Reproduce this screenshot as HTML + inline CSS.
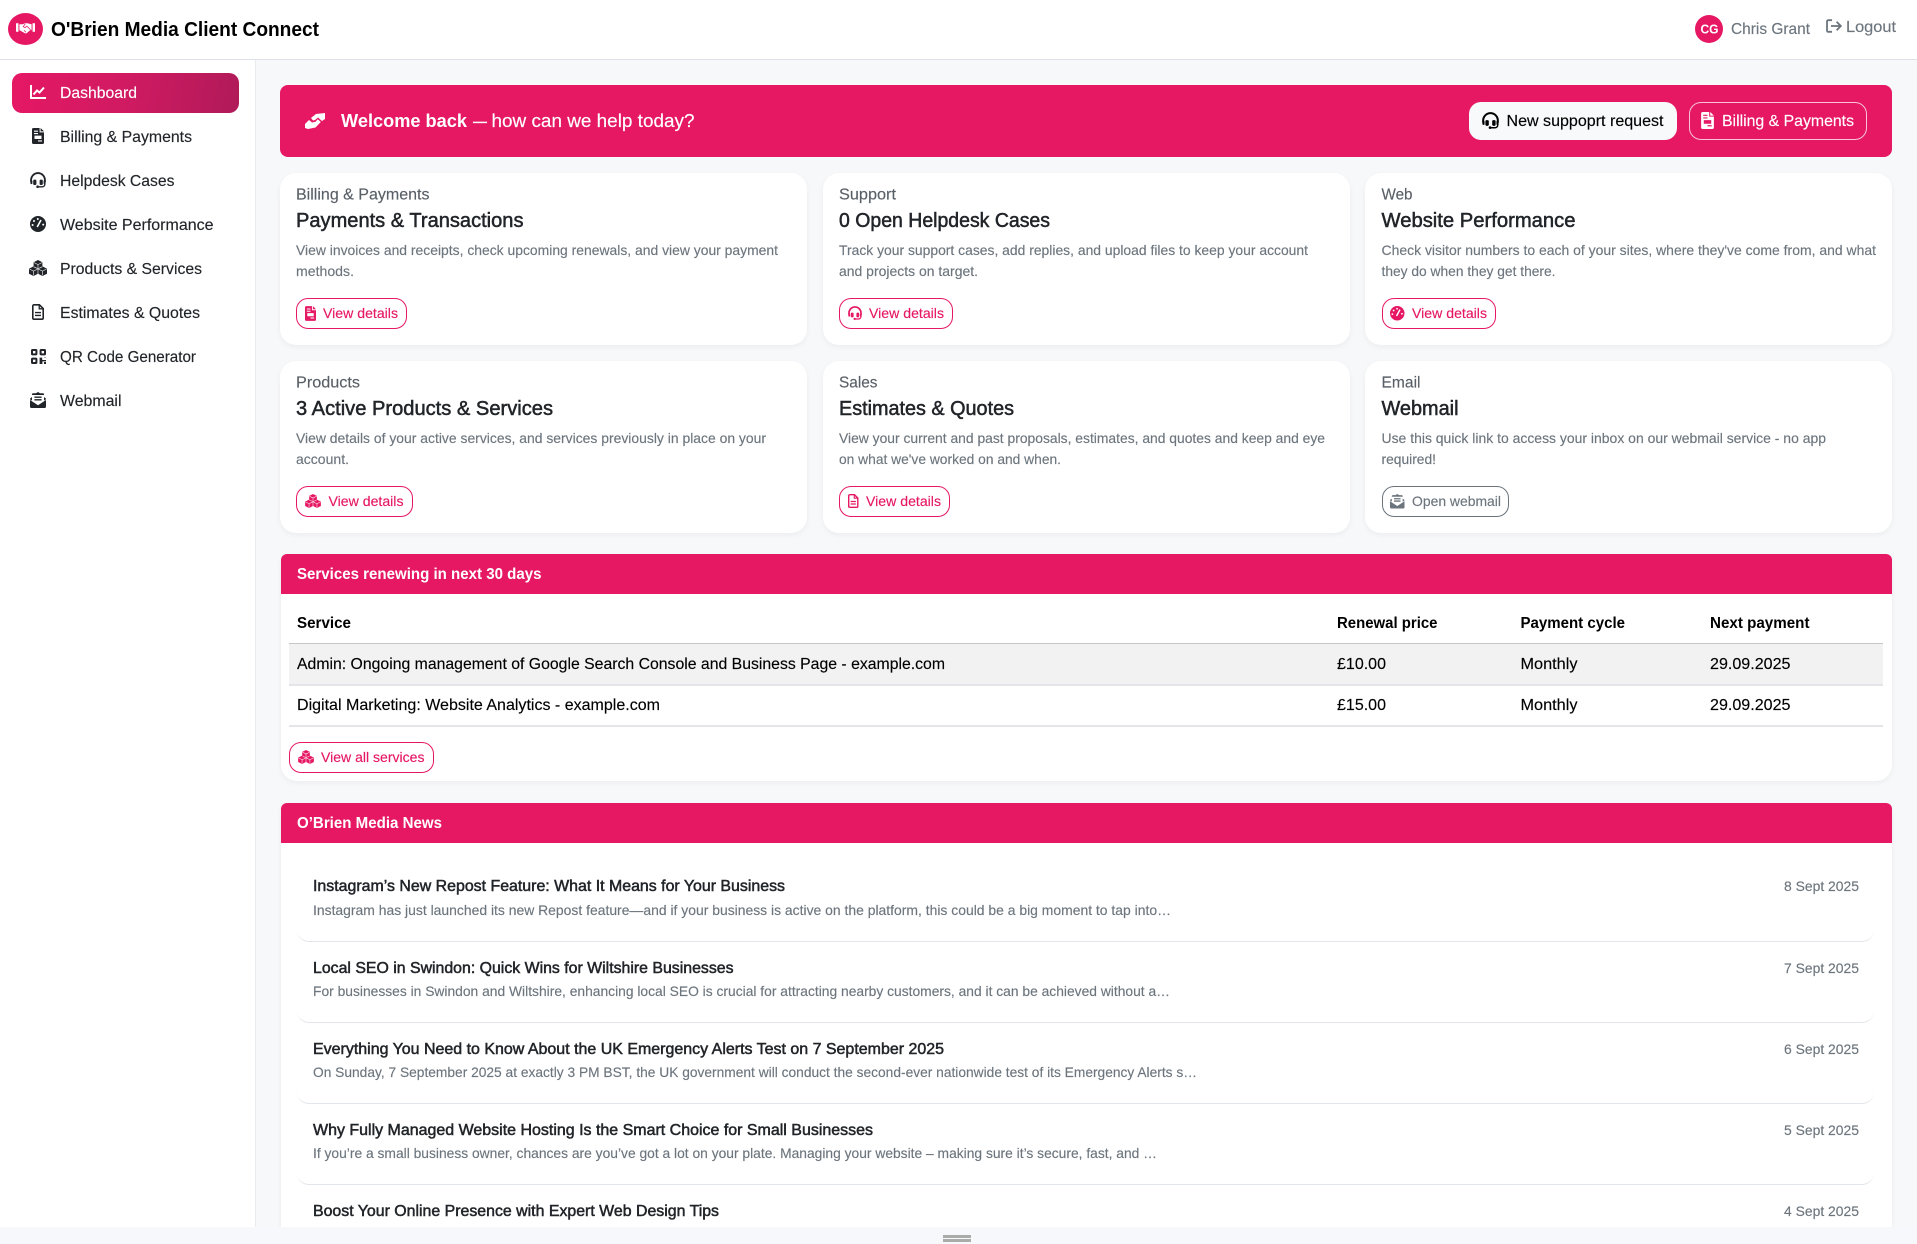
<!DOCTYPE html>
<html lang="en"><head><meta charset="utf-8"><title>O'Brien Media Client Connect</title>
<style>
*{box-sizing:border-box}
html,body{margin:0;padding:0;width:1917px;height:1244px;overflow:hidden;background:#f7f8fa;font-family:"Liberation Sans",sans-serif}
.b{position:absolute}
.topbar{left:0;top:0;width:1917px;height:60px;background:#fff;border-bottom:1.5px solid #dee2e6}
.side{left:0;top:60px;width:256px;height:1167px;background:#fff;border-right:1.5px solid #e9ecef}
.active{left:12px;top:73px;width:227px;height:40px;border-radius:10px;background:linear-gradient(100deg,#e61864 0%,#d01a62 50%,#b01a58 100%)}
.logo{left:8px;top:13px;width:35px;height:32px;border-radius:50%;background:#e61864}
.avatar{left:1695px;top:15px;width:28px;height:28px;border-radius:50%;background:#e61864}
.banner{left:280px;top:85px;width:1611.5px;height:72px;border-radius:8px;background:#e61864}
.btn1{left:1469px;top:102px;width:208px;height:38px;border-radius:12px;background:#f8f9fa}
.btn2{left:1689px;top:102px;width:178px;height:38px;border-radius:12px;border:1px solid #f6c5d8}
.card{background:#fff;border-radius:16px;box-shadow:0 2px 6px rgba(0,0,0,.05);height:172px;width:526.5px}
.vb{border:1px solid #e61864;border-radius:12px;height:31px;background:#fff}
.panel{left:281px;width:1610.5px;background:#fff;box-shadow:0 2px 6px rgba(0,0,0,.05);overflow:hidden}
.phead{position:absolute;left:0;top:0;width:100%;height:40px;background:#e61864}
.line{background:#e3e5e8;height:1.5px;left:289px;width:1594px}
.ni{left:297px;width:1577px;height:40px;border-bottom:1.5px solid #e2e5e9;border-radius:0 0 12px 12px}
.foot{left:0;top:1227px;width:1917px;height:17px;background:#f7f8fb}
.grip{left:943px;width:28px;height:2.5px;background:#a9aca9}
svg.t{position:absolute;left:0;top:0}
text{font-family:"Liberation Sans",sans-serif;white-space:pre;stroke:currentColor;stroke-width:.14px}
.s16{font-size:16px}.s14{font-size:14px}.s20{font-size:20px}.s18{font-size:18px}
text.bd{font-weight:700;stroke-width:0}
text.md{stroke-width:.5px}
.dk{fill:#212529;color:#212529}.gr{fill:#6c757d;color:#6c757d}.lb{fill:#585f66;color:#585f66}
.wh{fill:#fff;color:#fff}.pk{fill:#e61864;color:#e61864}.bk{fill:#000;color:#000}
</style></head><body>
<div class="b topbar"></div>
<div class="b side"></div>
<div class="b active"></div>
<div class="b logo"></div>
<div class="b avatar"></div>
<div class="b banner"></div>
<div class="b btn1"></div>
<div class="b btn2"></div>

<div class="b card" style="left:280px;top:173px"></div>
<div class="b card" style="left:823px;top:173px"></div>
<div class="b card" style="left:1365px;top:173px"></div>
<div class="b card" style="left:280px;top:361px"></div>
<div class="b card" style="left:823px;top:361px"></div>
<div class="b card" style="left:1365px;top:361px"></div>

<div class="b vb" style="left:296px;top:298px;width:111px"></div>
<div class="b vb" style="left:839px;top:298px;width:114px"></div>
<div class="b vb" style="left:1382px;top:298px;width:114px"></div>
<div class="b vb" style="left:296px;top:486px;width:117px"></div>
<div class="b vb" style="left:839px;top:486px;width:111px"></div>
<div class="b vb" style="left:1382px;top:486px;width:127px;border-color:#6c757d"></div>

<div class="b panel" style="top:554px;height:227px;border-radius:6px 6px 16px 16px"><div class="phead"></div></div>
<div class="b" style="left:289px;top:644px;width:1594px;height:40px;background:#f2f2f2"></div>
<div class="b" style="left:289px;top:642.5px;width:1594px;height:1.5px;background:#c4c6c8"></div>
<div class="b line" style="top:684px"></div>
<div class="b line" style="top:725px"></div>
<div class="b vb" style="left:289px;top:742px;width:145px"></div>

<div class="b panel" style="top:803px;height:424px;border-radius:6px 6px 0 0"><div class="phead"></div></div>
<div class="b ni" style="top:902px"></div>
<div class="b ni" style="top:983px"></div>
<div class="b ni" style="top:1064px"></div>
<div class="b ni" style="top:1145px"></div>

<div class="b foot"></div>
<div class="b grip" style="top:1235px"></div>
<div class="b grip" style="top:1239px"></div>

<svg class="t" width="1917" height="1244" viewBox="0 0 1917 1244" xmlns="http://www.w3.org/2000/svg">
<defs>
<symbol id="chart" viewBox="0 0 16 14"><path d="M1 0V13H16" fill="none" stroke="currentColor" stroke-width="2"/><path d="M3.5 9.5L7 5.5L9.5 7.5L14 2.5" fill="none" stroke="currentColor" stroke-width="2"/></symbol>
<symbol id="inv" viewBox="0 0 12 16"><path fill="currentColor" d="M8.6 0L12 3.4H8.6z"/><path fill="currentColor" fill-rule="evenodd" d="M1.5 0H7.6V4.4H12V14.5A1.5 1.5 0 0 1 10.5 16H1.5A1.5 1.5 0 0 1 0 14.5V1.5A1.5 1.5 0 0 1 1.5 0zM2 2.6V3.7H6V2.6zM2 5V6.1H6V5zM2.5 7.6V11H9.5V7.6zM6 12.4V13.5H10V12.4z"/></symbol>
<symbol id="head" viewBox="0 0 16 16"><path d="M1.1 10V8A6.9 6.9 0 0 1 14.9 8V10" fill="none" stroke="currentColor" stroke-width="1.9"/><rect x="3.2" y="7.6" width="3.2" height="5.4" rx="1.1" fill="currentColor"/><rect x="9.6" y="7.6" width="3.2" height="5.4" rx="1.1" fill="currentColor"/><rect x=".4" y="8.5" width="2" height="3.6" rx=".7" fill="currentColor"/><rect x="13.6" y="8.5" width="2" height="3.6" rx=".7" fill="currentColor"/><path d="M14.8 11V12.2A2.6 2.6 0 0 1 12.2 14.8H8" fill="none" stroke="currentColor" stroke-width="1.4"/><circle cx="7.6" cy="14.7" r="1.3" fill="currentColor"/></symbol>
<symbol id="gauge" viewBox="0 0 16 16"><circle cx="8" cy="8" r="8" fill="currentColor"/><path d="M7.2 11L11 4" stroke="#fff" stroke-width="1.6"/><circle cx="7.8" cy="3" r="1" fill="#fff"/><circle cx="4" cy="5" r="1" fill="#fff"/><circle cx="2.6" cy="9" r="1" fill="#fff"/><circle cx="13.2" cy="8.6" r="1" fill="#fff"/></symbol>
<symbol id="cubes" viewBox="0 0 18 16"><g fill="currentColor"><path d="M9 0L13.4 2.2V7.2L9 9.4L4.6 7.2V2.2z"/><path d="M4.5 6.4L9 8.7V13.7L4.5 16L0 13.7V8.7z"/><path d="M13.5 6.4L18 8.7V13.7L13.5 16L9 13.7V8.7z"/></g><g fill="none" stroke="#fff" stroke-width=".6"><path d="M5 2.6L9 4.6L13 2.6M9 4.6V8.3"/><path d="M.6 9.1L4.5 11.1L8.5 9.1M4.5 11.1V15.4"/><path d="M9.5 9.1L13.5 11.1L17.4 9.1M13.5 11.1V15.4M9 8.6V14M4.8 6.8L9 8.8L13.2 6.8"/></g></symbol>
<symbol id="doc" viewBox="0 0 12 16"><path d="M7.4 .8H2A1.2 1.2 0 0 0 .8 2V14A1.2 1.2 0 0 0 2 15.2H10A1.2 1.2 0 0 0 11.2 14V4.6z" fill="none" stroke="currentColor" stroke-width="1.6"/><path d="M7.2 1V4.8H11" fill="none" stroke="currentColor" stroke-width="1.3"/><path d="M3 8.6H9M3 11.4H9" stroke="currentColor" stroke-width="1.4"/></symbol>
<symbol id="qr" viewBox="0 0 15 15"><g fill="none" stroke="currentColor" stroke-width="2"><rect x="1" y="1" width="4.4" height="4.4" rx=".6"/><rect x="9.6" y="1" width="4.4" height="4.4" rx=".6"/><rect x="1" y="9.6" width="4.4" height="4.4" rx=".6"/></g><path fill="currentColor" d="M8.6 8.6H11.2V11H15V9H13V8.6H15V12.4H11.4V15H8.6zM13 13H15V15H13z"/></symbol>
<symbol id="mail" viewBox="0 0 16 16"><path fill="currentColor" fill-rule="evenodd" d="M8 0L10 1.3H13A1 1 0 0 1 14 2.3V5L16 6.6V7.2L14 8.6V3H2V8.6L0 7.2V6.6L2 5V2.3A1 1 0 0 1 3 1.3H6z"/><path fill="currentColor" d="M0 8L8 13.2L16 8V14.5A1.5 1.5 0 0 1 14.5 16H1.5A1.5 1.5 0 0 1 0 14.5z"/><path d="M4.4 5.2H11.6M4.4 7.8H11.6" stroke="currentColor" stroke-width="1.4"/></symbol>
<symbol id="shake" viewBox="0 0 20 12"><path fill="#fff" d="M0 1H2.6V10H0zM17.4 1H20V10H17.4zM3.6 2H7.2L10 .8L13 1.2L16.4 2V8.2L15 8.2L11 11.6L9.6 11.6L3.6 8.2z"/><path fill="none" stroke="#e61864" stroke-width=".8" d="M10 1.4L7.6 4.6L9.6 5.6L11.4 4L15.4 8M8.5 8.5L10.5 10.5"/></symbol>
<symbol id="hands" viewBox="0 0 20 16"><path fill="currentColor" d="M6 5L11 1L20 0V6L17 8L13 4.5L10 7L8 7.5zM4 7L7 9.5L10.5 8.8L12.8 6.2L15.8 9L10.5 14.5L3 16L0 15V11z"/></symbol>
<symbol id="logout" viewBox="0 0 16 14"><path d="M6 1.2H2.2A1.2 1.2 0 0 0 1 2.4V11.6A1.2 1.2 0 0 0 2.2 12.8H6" fill="none" stroke="currentColor" stroke-width="1.8"/><path d="M5 7H14.6M10.6 2.8L14.8 7L10.6 11.2" fill="none" stroke="currentColor" stroke-width="1.8"/></symbol>
</defs>

<!-- top -->
<use href="#shake" x="16" y="22" width="19" height="12"/>
<text x="51" y="36" class="s20 bd bk" textLength="268" lengthAdjust="spacingAndGlyphs">O'Brien Media Client Connect</text>
<text x="1700.5" y="33.5" class="bd wh" font-size="12.5" textLength="18" lengthAdjust="spacingAndGlyphs">CG</text>
<text x="1731" y="34" class="s16 gr" textLength="79" lengthAdjust="spacingAndGlyphs">Chris Grant</text>
<use href="#logout" x="1826" y="19" width="16" height="14" class="gr"/>
<text x="1846" y="32" class="s16 gr" textLength="50" lengthAdjust="spacingAndGlyphs">Logout</text>

<!-- sidebar -->
<use href="#chart" x="30" y="85" width="16" height="14" class="wh"/>
<text x="60" y="98" class="s16 wh" textLength="77" lengthAdjust="spacingAndGlyphs">Dashboard</text>
<use href="#inv" x="32" y="128" width="12" height="16" class="dk"/>
<text x="60" y="142" class="s16 dk" textLength="132" lengthAdjust="spacingAndGlyphs">Billing &amp; Payments</text>
<use href="#head" x="30" y="172" width="16" height="16" class="dk"/>
<text x="60" y="186" class="s16 dk" textLength="114.5" lengthAdjust="spacingAndGlyphs">Helpdesk Cases</text>
<use href="#gauge" x="30" y="216" width="16" height="16" class="dk"/>
<text x="60" y="230" class="s16 dk" textLength="153.5" lengthAdjust="spacingAndGlyphs">Website Performance</text>
<use href="#cubes" x="29" y="260" width="18" height="16" class="dk"/>
<text x="60" y="274" class="s16 dk" textLength="142" lengthAdjust="spacingAndGlyphs">Products &amp; Services</text>
<use href="#doc" x="32" y="304" width="12" height="16" class="dk"/>
<text x="60" y="318" class="s16 dk" textLength="140" lengthAdjust="spacingAndGlyphs">Estimates &amp; Quotes</text>
<use href="#qr" x="31" y="349" width="15" height="15" class="dk"/>
<text x="60" y="362" class="s16 dk" textLength="136" lengthAdjust="spacingAndGlyphs">QR Code Generator</text>
<use href="#mail" x="30" y="392" width="16" height="16" class="dk"/>
<text x="60" y="406" class="s16 dk" textLength="61.5" lengthAdjust="spacingAndGlyphs">Webmail</text>

<!-- banner -->
<use href="#hands" x="305" y="113" width="20" height="16" class="wh"/>
<text x="341" y="127" class="s18 bd wh" textLength="126" lengthAdjust="spacingAndGlyphs">Welcome back</text>
<text x="473" y="127" class="s18 wh" textLength="14" lengthAdjust="spacingAndGlyphs">—</text>
<text x="491.5" y="127" class="s18 wh" textLength="203" lengthAdjust="spacingAndGlyphs">how can we help today?</text>
<use href="#head" x="1482" y="112" width="17" height="17" class="bk"/>
<text x="1506.5" y="126" class="s16 bk" textLength="157" lengthAdjust="spacingAndGlyphs">New suppoprt request</text>
<use href="#inv" x="1701" y="112" width="13" height="17" class="wh"/>
<text x="1722" y="126" class="s16 wh" textLength="132" lengthAdjust="spacingAndGlyphs">Billing &amp; Payments</text>

<!-- cards row 1 -->
<text x="296" y="199.5" class="s16 lb" textLength="133.5" lengthAdjust="spacingAndGlyphs">Billing &amp; Payments</text>
<text x="296" y="227" class="s20 dk md" textLength="227.5" lengthAdjust="spacingAndGlyphs">Payments &amp; Transactions</text>
<text x="296" y="255" class="s14 gr" textLength="482" lengthAdjust="spacingAndGlyphs">View invoices and receipts, check upcoming renewals, and view your payment</text>
<text x="296" y="276" class="s14 gr" textLength="58" lengthAdjust="spacingAndGlyphs">methods.</text>
<use href="#inv" x="305" y="306" width="11" height="15" class="pk"/>
<text x="323" y="318" class="s14 pk" textLength="75" lengthAdjust="spacingAndGlyphs">View details</text>

<text x="839" y="199.5" class="s16 lb" textLength="57" lengthAdjust="spacingAndGlyphs">Support</text>
<text x="839" y="227" class="s20 dk md" textLength="211" lengthAdjust="spacingAndGlyphs">0 Open Helpdesk Cases</text>
<text x="839" y="255" class="s14 gr" textLength="469" lengthAdjust="spacingAndGlyphs">Track your support cases, add replies, and upload files to keep your account</text>
<text x="839" y="276" class="s14 gr" textLength="139" lengthAdjust="spacingAndGlyphs">and projects on target.</text>
<use href="#head" x="848" y="306" width="14" height="14" class="pk"/>
<text x="869" y="318" class="s14 pk" textLength="75" lengthAdjust="spacingAndGlyphs">View details</text>

<text x="1381.5" y="199.5" class="s16 lb" textLength="31" lengthAdjust="spacingAndGlyphs">Web</text>
<text x="1381.5" y="227" class="s20 dk md" textLength="194" lengthAdjust="spacingAndGlyphs">Website Performance</text>
<text x="1381.5" y="255" class="s14 gr" textLength="494.5" lengthAdjust="spacingAndGlyphs">Check visitor numbers to each of your sites, where they've come from, and what</text>
<text x="1381.5" y="276" class="s14 gr" textLength="174" lengthAdjust="spacingAndGlyphs">they do when they get there.</text>
<use href="#gauge" x="1390" y="306" width="14.5" height="14.5" class="pk"/>
<text x="1412" y="318" class="s14 pk" textLength="75" lengthAdjust="spacingAndGlyphs">View details</text>

<!-- cards row 2 -->
<text x="296" y="387.5" class="s16 lb" textLength="64" lengthAdjust="spacingAndGlyphs">Products</text>
<text x="296" y="415" class="s20 dk md" textLength="257" lengthAdjust="spacingAndGlyphs">3 Active Products &amp; Services</text>
<text x="296" y="443" class="s14 gr" textLength="470" lengthAdjust="spacingAndGlyphs">View details of your active services, and services previously in place on your</text>
<text x="296" y="464" class="s14 gr" textLength="53" lengthAdjust="spacingAndGlyphs">account.</text>
<use href="#cubes" x="305" y="494" width="16" height="14" class="pk"/>
<text x="328.5" y="506" class="s14 pk" textLength="75" lengthAdjust="spacingAndGlyphs">View details</text>

<text x="839" y="387.5" class="s16 lb" textLength="38.5" lengthAdjust="spacingAndGlyphs">Sales</text>
<text x="839" y="415" class="s20 dk md" textLength="175" lengthAdjust="spacingAndGlyphs">Estimates &amp; Quotes</text>
<text x="839" y="443" class="s14 gr" textLength="486" lengthAdjust="spacingAndGlyphs">View your current and past proposals, estimates, and quotes and keep and eye</text>
<text x="839" y="464" class="s14 gr" textLength="222" lengthAdjust="spacingAndGlyphs">on what we've worked on and when.</text>
<use href="#doc" x="848" y="494" width="10.5" height="14" class="pk"/>
<text x="866" y="506" class="s14 pk" textLength="75" lengthAdjust="spacingAndGlyphs">View details</text>

<text x="1381.5" y="387.5" class="s16 lb" textLength="39" lengthAdjust="spacingAndGlyphs">Email</text>
<text x="1381.5" y="415" class="s20 dk md" textLength="77" lengthAdjust="spacingAndGlyphs">Webmail</text>
<text x="1381.5" y="443" class="s14 gr" textLength="444.5" lengthAdjust="spacingAndGlyphs">Use this quick link to access your inbox on our webmail service - no app</text>
<text x="1381.5" y="464" class="s14 gr" textLength="54.5" lengthAdjust="spacingAndGlyphs">required!</text>
<use href="#mail" x="1390" y="494" width="14.5" height="14.5" class="gr"/>
<text x="1412" y="506" class="s14 gr" textLength="89" lengthAdjust="spacingAndGlyphs">Open webmail</text>

<!-- services -->
<text x="297" y="579" class="s16 bd wh" textLength="244.5" lengthAdjust="spacingAndGlyphs">Services renewing in next 30 days</text>
<text x="297" y="628" class="s16 bd bk" textLength="54" lengthAdjust="spacingAndGlyphs">Service</text>
<text x="1337" y="628" class="s16 bd bk" textLength="100.5" lengthAdjust="spacingAndGlyphs">Renewal price</text>
<text x="1520.5" y="628" class="s16 bd bk" textLength="104.5" lengthAdjust="spacingAndGlyphs">Payment cycle</text>
<text x="1710" y="628" class="s16 bd bk" textLength="99.5" lengthAdjust="spacingAndGlyphs">Next payment</text>
<text x="297" y="669" class="s16 bk" textLength="648" lengthAdjust="spacingAndGlyphs">Admin: Ongoing management of Google Search Console and Business Page - example.com</text>
<text x="1337" y="669" class="s16 bk" textLength="49" lengthAdjust="spacingAndGlyphs">£10.00</text>
<text x="1520.5" y="669" class="s16 bk" textLength="57" lengthAdjust="spacingAndGlyphs">Monthly</text>
<text x="1710" y="669" class="s16 bk" textLength="80.5" lengthAdjust="spacingAndGlyphs">29.09.2025</text>
<text x="297" y="710" class="s16 bk" textLength="363" lengthAdjust="spacingAndGlyphs">Digital Marketing: Website Analytics - example.com</text>
<text x="1337" y="710" class="s16 bk" textLength="49" lengthAdjust="spacingAndGlyphs">£15.00</text>
<text x="1520.5" y="710" class="s16 bk" textLength="57" lengthAdjust="spacingAndGlyphs">Monthly</text>
<text x="1710" y="710" class="s16 bk" textLength="80.5" lengthAdjust="spacingAndGlyphs">29.09.2025</text>
<use href="#cubes" x="298" y="750" width="16" height="14" class="pk"/>
<text x="321" y="762" class="s14 pk" textLength="103.5" lengthAdjust="spacingAndGlyphs">View all services</text>

<!-- news -->
<text x="297" y="828" class="s16 bd wh" textLength="145" lengthAdjust="spacingAndGlyphs">O’Brien Media News</text>

<text x="313" y="891" class="s16 dk md" textLength="472" lengthAdjust="spacingAndGlyphs">Instagram’s New Repost Feature: What It Means for Your Business</text>
<text x="313" y="915" class="s14 gr" textLength="858" lengthAdjust="spacingAndGlyphs">Instagram has just launched its new Repost feature—and if your business is active on the platform, this could be a big moment to tap into…</text>
<text x="1784" y="891" class="s14 gr" textLength="75" lengthAdjust="spacingAndGlyphs">8 Sept 2025</text>

<text x="313" y="973" class="s16 dk md" textLength="420.5" lengthAdjust="spacingAndGlyphs">Local SEO in Swindon: Quick Wins for Wiltshire Businesses</text>
<text x="313" y="996" class="s14 gr" textLength="857" lengthAdjust="spacingAndGlyphs">For businesses in Swindon and Wiltshire, enhancing local SEO is crucial for attracting nearby customers, and it can be achieved without a…</text>
<text x="1784" y="973" class="s14 gr" textLength="75" lengthAdjust="spacingAndGlyphs">7 Sept 2025</text>

<text x="313" y="1054" class="s16 dk md" textLength="631" lengthAdjust="spacingAndGlyphs">Everything You Need to Know About the UK Emergency Alerts Test on 7 September 2025</text>
<text x="313" y="1077" class="s14 gr" textLength="884" lengthAdjust="spacingAndGlyphs">On Sunday, 7 September 2025 at exactly 3 PM BST, the UK government will conduct the second-ever nationwide test of its Emergency Alerts s…</text>
<text x="1784" y="1054" class="s14 gr" textLength="75" lengthAdjust="spacingAndGlyphs">6 Sept 2025</text>

<text x="313" y="1135" class="s16 dk md" textLength="560" lengthAdjust="spacingAndGlyphs">Why Fully Managed Website Hosting Is the Smart Choice for Small Businesses</text>
<text x="313" y="1158" class="s14 gr" textLength="844" lengthAdjust="spacingAndGlyphs">If you’re a small business owner, chances are you’ve got a lot on your plate. Managing your website – making sure it’s secure, fast, and …</text>
<text x="1784" y="1135" class="s14 gr" textLength="75" lengthAdjust="spacingAndGlyphs">5 Sept 2025</text>

<text x="313" y="1216" class="s16 dk md" textLength="406" lengthAdjust="spacingAndGlyphs">Boost Your Online Presence with Expert Web Design Tips</text>
<text x="1784" y="1216" class="s14 gr" textLength="75" lengthAdjust="spacingAndGlyphs">4 Sept 2025</text>
</svg>
</body></html>
